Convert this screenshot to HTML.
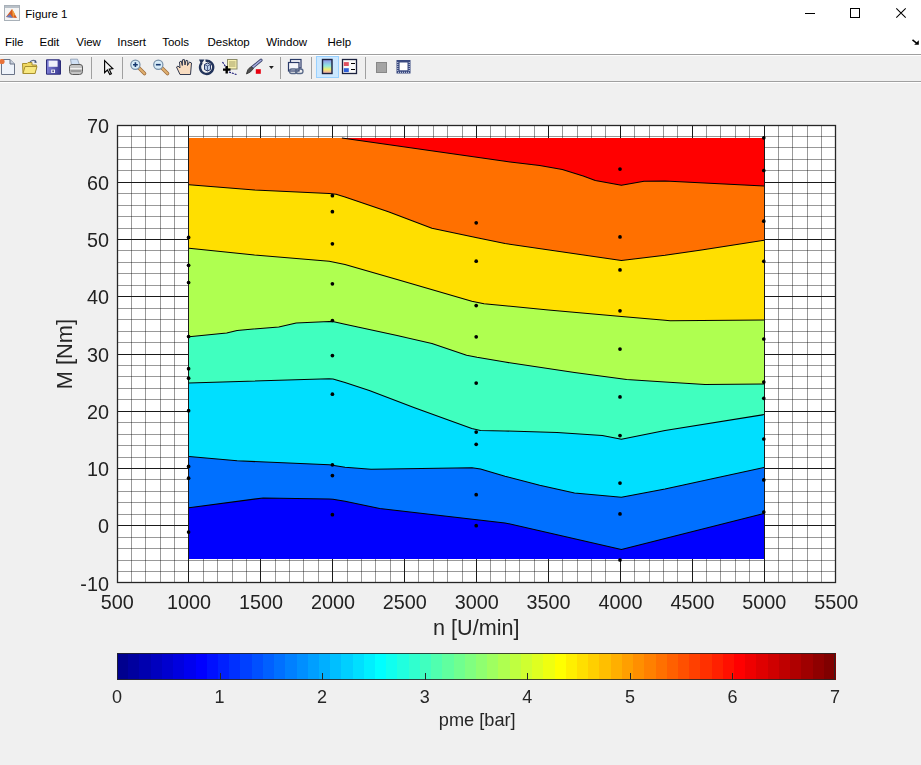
<!DOCTYPE html>
<html><head><meta charset="utf-8">
<style>
html,body{margin:0;padding:0;width:921px;height:765px;overflow:hidden;background:#f0f0f0;font-family:"Liberation Sans",sans-serif;}
#title{position:absolute;left:0;top:0;width:921px;height:54px;background:#fff;}
#title .t{position:absolute;left:25px;top:6px;font-size:12px;color:#000;}
.menu{position:absolute;top:34px;font-size:12px;color:#000;}
#sep1{position:absolute;left:0;top:54px;width:921px;height:1px;background:#a0a0a0;}
#sep1b{position:absolute;left:0;top:55px;width:921px;height:1px;background:#fff;}
#tb{position:absolute;left:0;top:56px;width:921px;height:25px;background:#f0f0f0;}
#sep2{position:absolute;left:0;top:81px;width:921px;height:1px;background:#a0a0a0;}
#sep2b{position:absolute;left:0;top:82px;width:921px;height:1px;background:#fff;}
.vs{position:absolute;top:57px;width:1px;height:22px;background:#a0a0a0;}
.ic{position:absolute;top:56px;}
.fig{position:absolute;left:0;top:82px;will-change:transform;}
</style></head><body>
<div id="title">
<svg style="position:absolute;left:4px;top:5px" width="16" height="16" viewBox="0 0 16 16">
<rect x="0.5" y="0.5" width="15" height="15" fill="#f4f4f4" stroke="#a8b0b8"/>
<rect x="1" y="1" width="14" height="2" fill="#b8c0c8"/>
<path d="M2 12 L8 4 L13 13 Z" fill="#d65a20"/>
<path d="M2 12 L6 9 L9 13 Z" fill="#6a7fc0"/>
<path d="M8 4 L11 9 L9 13 Z" fill="#f0a040"/>
</svg>
<svg style="position:absolute;left:0;top:0" width="921" height="54" font-family="Liberation Sans, sans-serif" font-size="11.5" fill="#000">
<text x="25.3" y="17.9">Figure 1</text>
<text x="4.9" y="45.6">File</text>
<text x="39.5" y="45.6">Edit</text>
<text x="76.2" y="45.6">View</text>
<text x="117.3" y="45.6">Insert</text>
<text x="162.2" y="45.6">Tools</text>
<text x="207.5" y="45.6">Desktop</text>
<text x="266.2" y="45.6">Window</text>
<text x="327.5" y="45.6">Help</text>
<rect x="805" y="13" width="10" height="1" fill="#000"/>
<rect x="850.5" y="8.5" width="9" height="9" fill="none" stroke="#000"/>
<path d="M896.3 8.3L905.7 17.7M905.7 8.3L896.3 17.7" stroke="#000" stroke-width="1.05"/>
</svg>
<svg style="position:absolute;left:912px;top:39px" width="8" height="6" viewBox="0 0 8 6"><path d="M0.5 0.8 L5 4.5" stroke="#000" stroke-width="1.6"/><path d="M6.8 1.2 L6.8 5.8 L2.2 5.8 Z" fill="#000"/></svg>
</div>
<div id="sep1"></div><div id="sep1b"></div>
<div id="tb"></div>
<div id="sep2"></div><div id="sep2b"></div>
<div class="vs" style="left:91px"></div>
<div class="vs" style="left:122px"></div>
<div class="vs" style="left:280px"></div>
<div class="vs" style="left:311px"></div>
<div class="vs" style="left:365px"></div>
<svg style="position:absolute;left:0;top:0" width="430" height="82" viewBox="0 0 430 82">
<!-- new doc -->
<path d="M1.5 59.5 H10 L14.5 64 V74.5 H1.5 Z" fill="#eef3fa" stroke="#6a7488" stroke-width="1"/>
<path d="M10 59.5 V64 H14.5" fill="#c8d0dc" stroke="#6a7488" stroke-width="1"/>
<circle cx="2" cy="61.5" r="2.6" fill="#e8733a"/>
<!-- open folder -->
<path d="M22.5 63.5 H27 L28 62.5 H32 V65 H36.5 L35 73.5 H23 Z" fill="#f0d860" stroke="#a89030" stroke-width="1"/>
<path d="M23 73.5 L25 66.5 H37 L35 73.5 Z" fill="#f8e880" stroke="#a89030" stroke-width="1"/>
<path d="M30 62 Q33 59 36 61.5" fill="none" stroke="#607090" stroke-width="1.2"/>
<path d="M35 60 L37 62.5 L34.5 63 Z" fill="#405070"/>
<!-- save floppy -->
<defs><linearGradient id="flp" x1="0" y1="0" x2="1" y2="0"><stop offset="0" stop-color="#8080d8"/><stop offset="1" stop-color="#383890"/></linearGradient></defs>
<path d="M46.5 59.8 H59.5 L60.5 61 V74.2 H46.5 Z" fill="url(#flp)" stroke="#2c2c78" stroke-width="1"/>
<rect x="48.6" y="60.6" width="9" height="6.2" fill="#eef0fa"/>
<rect x="51.2" y="69.6" width="3.8" height="3.4" fill="#f4f4fa"/>
<rect x="52.4" y="70.4" width="1.4" height="1.8" fill="#303070"/>
<!-- printer -->
<path d="M71.5 65 L70.5 59.2 H77.5 L79.5 65 Z" fill="#d0e0f4" stroke="#8898b0" stroke-width="0.8"/>
<path d="M69.5 66.5 Q70 64.5 72 64.5 H80 Q82.5 64.5 82.5 67 V71.5 Q82.5 74.5 79.5 74.5 H72.5 Q69.5 74.5 69.5 71.5 Z" fill="#c4c4c4" stroke="#5a5a5a" stroke-width="1"/>
<path d="M70.2 68.6 H81.8" stroke="#f0f0f0" stroke-width="1.2"/>
<path d="M70.5 71 H81.5" stroke="#6a6a6a" stroke-width="0.9"/>
<!-- arrow -->
<path d="M104.6 60.6 V72.6 L107.4 70 L109.8 74.6 L111.4 73.8 L109.2 69.2 L112.8 68.6 Z" fill="#f4f4f4" stroke="#000" stroke-width="1.15" stroke-linejoin="miter"/>
<!-- zoom in -->
<path d="M139 68 L144.5 73.5" stroke="#a07040" stroke-width="3.6" stroke-linecap="round"/>
<path d="M139 68 L144.5 73.5" stroke="#e0b070" stroke-width="2" stroke-linecap="round"/>
<circle cx="135.4" cy="64.7" r="4.6" fill="#d8ecf8" stroke="#7890a8" stroke-width="1.2"/>
<path d="M133 64.7 H137.8 M135.4 62.3 V67.1" stroke="#183a70" stroke-width="1.6"/>
<!-- zoom out -->
<path d="M162 68 L167.5 73.5" stroke="#a07040" stroke-width="3.6" stroke-linecap="round"/>
<path d="M162 68 L167.5 73.5" stroke="#e0b070" stroke-width="2" stroke-linecap="round"/>
<circle cx="158.3" cy="64.7" r="4.6" fill="#d8ecf8" stroke="#7890a8" stroke-width="1.2"/>
<path d="M155.9 64.7 H160.7" stroke="#183a70" stroke-width="1.6"/>
<!-- pan hand -->
<path d="M180 74.5 L176.5 67 L178 66 L180 68 L179.5 62 L181.2 61 L182.3 65.5 L182.5 59.8 L184.3 59.5 L185 65 L186 60.3 L187.8 60.8 L187.5 65.5 L189.5 62 L191.5 63 L190.5 74.5 Z" fill="#f8dcc0" stroke="#283048" stroke-width="0.95" stroke-linejoin="round"/>
<!-- rotate 3d -->
<path d="M201.8 62.8 A6.6 6.6 0 1 0 205.5 60.8" fill="none" stroke="#22335a" stroke-width="2.4"/>
<path d="M199 59.6 L204.5 59.4 L201.2 64.2 Z" fill="#22335a"/>
<path d="M204.5 64.5 L207.5 63 L210.5 64.5 V69.5 L207.5 71 L204.5 69.5 Z" fill="#b8cce8" stroke="#2a3a68" stroke-width="1"/>
<path d="M204.5 64.5 L207.5 66 L210.5 64.5 M207.5 66 V71" fill="none" stroke="#3a4a78" stroke-width="0.8"/>
<!-- data cursor -->
<rect x="227.5" y="59.5" width="9.5" height="9.5" fill="#f8f0b0" stroke="#8c8c68" stroke-width="1"/>
<path d="M229 62 H235.5 M229 64 H235.5 M229 66 H235.5" stroke="#9a9460" stroke-width="0.9"/>
<path d="M222.5 62 L226.5 68 M229 72 L236.5 74.5" stroke="#101070" stroke-width="1.1" stroke-dasharray="2 1"/>
<path d="M223 69.6 H230.5 M226.7 66 V73.5" stroke="#000" stroke-width="2.4"/>
<!-- brush -->
<path d="M252.7 67.1 L261 60.3" stroke="#404870" stroke-width="3.2" stroke-linecap="round"/>
<path d="M252.7 67.1 L261 60.3" stroke="#a8b0e0" stroke-width="1.4" stroke-linecap="round"/>
<path d="M246.5 74 Q247 69 251 66.5 L253.5 68.5 Q251 72.5 246.5 74 Z" fill="#505050" stroke="#303030" stroke-width="0.8"/>
<rect x="255.8" y="69.2" width="5" height="4.6" fill="#e80010"/>
<path d="M269 66 H273.8 L271.4 69 Z" fill="#202020"/>
<!-- link -->
<rect x="290.5" y="59.5" width="10.5" height="8.5" fill="#f4f6fa" stroke="#2a3a68" stroke-width="1.2"/>
<rect x="288.5" y="62.5" width="10.5" height="8.5" fill="#f4f6fa" stroke="#2a3a68" stroke-width="1.2"/>
<rect x="289.5" y="69" width="7.5" height="4.5" rx="2.2" fill="none" stroke="#586888" stroke-width="1.3"/>
<rect x="295.5" y="69" width="7.5" height="4.5" rx="2.2" fill="none" stroke="#586888" stroke-width="1.3"/>
<!-- colorbar pressed -->
<rect x="316.5" y="56.5" width="22" height="21" fill="#cce8ff" stroke="#99d1ff" stroke-width="1"/>
<defs><linearGradient id="cbg" x1="0" y1="0" x2="0" y2="1">
<stop offset="0" stop-color="#9090e8"/><stop offset="0.45" stop-color="#90e8e0"/><stop offset="0.7" stop-color="#f0f070"/><stop offset="1" stop-color="#f0a0b0"/></linearGradient></defs>
<rect x="322.5" y="59.5" width="9.5" height="14" fill="url(#cbg)" stroke="#1c2240" stroke-width="1.4"/>
<!-- legend -->
<rect x="342.5" y="59.5" width="14" height="14" fill="#fafafa" stroke="#1c2240" stroke-width="1.3"/>
<rect x="343.8" y="62.1" width="5" height="3.9" fill="#e05060"/>
<rect x="343.8" y="68.2" width="5" height="3.9" fill="#3060d8"/>
<path d="M351 63.5 H355 M351 69.5 H355" stroke="#000" stroke-width="1.2"/>
<!-- hide plot tools -->
<rect x="376.5" y="62.5" width="10" height="10" fill="#a4a4a4" stroke="#888" stroke-width="1"/>
<!-- show plot tools -->
<rect x="396.5" y="60" width="14" height="13.5" fill="#3a4a80"/>
<rect x="399.6" y="62.5" width="7.9" height="7.8" fill="#fff"/>
<path d="M397.8 62 V71 M409.2 62 V71 M398 72.3 H409" stroke="#d8dcec" stroke-width="1" stroke-dasharray="1 1"/>
</svg>

<svg class="fig" width="921" height="683" viewBox="0 82 921 683"><rect x="117" y="125" width="718" height="457" fill="#fff"/><path d="M131.5 125V582M145.5 125V582M160.5 125V582M174.5 125V582M203.5 125V582M217.5 125V582M232.5 125V582M246.5 125V582M275.5 125V582M289.5 125V582M303.5 125V582M318.5 125V582M347.5 125V582M361.5 125V582M375.5 125V582M390.5 125V582M418.5 125V582M433.5 125V582M447.5 125V582M462.5 125V582M490.5 125V582M505.5 125V582M519.5 125V582M534.5 125V582M562.5 125V582M577.5 125V582M591.5 125V582M605.5 125V582M634.5 125V582M649.5 125V582M663.5 125V582M677.5 125V582M706.5 125V582M720.5 125V582M735.5 125V582M749.5 125V582M778.5 125V582M792.5 125V582M807.5 125V582M821.5 125V582" stroke="#000" stroke-opacity="0.4" stroke-width="1" fill="none"/><path d="M117 571.5H835M117 560.5H835M117 548.5H835M117 537.5H835M117 514.5H835M117 502.5H835M117 491.5H835M117 479.5H835M117 457.5H835M117 445.5H835M117 434.5H835M117 422.5H835M117 399.5H835M117 388.5H835M117 376.5H835M117 365.5H835M117 342.5H835M117 331.5H835M117 319.5H835M117 308.5H835M117 285.5H835M117 273.5H835M117 262.5H835M117 250.5H835M117 228.5H835M117 216.5H835M117 205.5H835M117 193.5H835M117 170.5H835M117 159.5H835M117 147.5H835M117 136.5H835" stroke="#000" stroke-opacity="0.4" stroke-width="1" fill="none"/><path d="M188.5 125V582M260.5 125V582M332.5 125V582M404.5 125V582M476.5 125V582M548.5 125V582M620.5 125V582M692.5 125V582M764.5 125V582M117 525.5H835M117 468.5H835M117 411.5H835M117 354.5H835M117 296.5H835M117 239.5H835M117 182.5H835" stroke="#1a1a1a" stroke-width="1" fill="none"/><rect x="189.0" y="138.0" width="575.0" height="421.0" fill="#0000ff"/><polygon points="189.0,507.8 263.2,497.9 329.2,499.1 333.0,499.2 345.0,501.2 379.7,508.6 505.0,522.9 557.1,534.7 621.4,549.5 665.0,538.4 764.0,513.4 764.0,138.0 189.0,138.0" fill="#0070ff"/><polygon points="189.0,456.5 237.1,460.8 329.2,464.8 345.0,467.3 371.0,469.2 472.0,467.7 480.5,469.0 505.0,476.2 539.7,485.2 574.5,493.0 621.4,497.2 665.0,488.9 764.0,467.4 764.0,138.0 189.0,138.0" fill="#00dfff"/><polygon points="189.0,382.9 329.2,378.8 333.0,379.0 345.0,382.6 369.3,390.4 414.5,407.8 471.8,428.6 480.5,430.4 505.0,431.0 557.1,432.5 602.3,435.6 621.4,439.2 665.0,430.6 764.0,414.6 764.0,138.0 189.0,138.0" fill="#40ffbf"/><polygon points="189.0,336.8 226.7,333.0 237.1,330.4 278.8,326.9 296.2,323.1 329.2,321.6 332.7,321.6 345.0,324.2 397.1,335.6 431.9,343.4 466.6,355.2 477.0,357.3 505.0,362.1 574.5,372.5 626.6,379.5 665.0,382.0 705.0,384.4 764.0,383.9 764.0,138.0 189.0,138.0" fill="#afff50"/><polygon points="189.0,248.2 254.5,255.1 329.2,261.2 345.0,264.5 397.1,279.5 471.8,301.2 484.0,303.8 505.0,305.8 548.4,310.0 621.5,316.5 665.0,320.2 670.2,320.7 764.0,320.0 764.0,138.0 189.0,138.0" fill="#ffdf00"/><polygon points="189.0,184.8 254.5,190.0 329.2,193.5 336.1,194.3 345.0,196.9 388.4,211.7 431.9,228.2 477.0,237.8 505.0,243.5 621.4,260.4 665.0,255.2 701.5,250.0 764.0,240.3 764.0,138.0 189.0,138.0" fill="#ff7000"/><polygon points="341.9,138.0 505.0,161.3 539.7,165.6 562.3,169.6 583.2,176.0 595.3,180.4 621.4,185.2 644.0,181.3 665.0,180.9 764.0,186.1 764.0,138.0" fill="#ff0000"/><polyline points="189.0,507.8 263.2,497.9 329.2,499.1 333.0,499.2 345.0,501.2 379.7,508.6 505.0,522.9 557.1,534.7 621.4,549.5 665.0,538.4 764.0,513.4" fill="none" stroke="#000" stroke-width="1.05" stroke-linejoin="round"/><polyline points="189.0,456.5 237.1,460.8 329.2,464.8 345.0,467.3 371.0,469.2 472.0,467.7 480.5,469.0 505.0,476.2 539.7,485.2 574.5,493.0 621.4,497.2 665.0,488.9 764.0,467.4" fill="none" stroke="#000" stroke-width="1.05" stroke-linejoin="round"/><polyline points="189.0,382.9 329.2,378.8 333.0,379.0 345.0,382.6 369.3,390.4 414.5,407.8 471.8,428.6 480.5,430.4 505.0,431.0 557.1,432.5 602.3,435.6 621.4,439.2 665.0,430.6 764.0,414.6" fill="none" stroke="#000" stroke-width="1.05" stroke-linejoin="round"/><polyline points="189.0,336.8 226.7,333.0 237.1,330.4 278.8,326.9 296.2,323.1 329.2,321.6 332.7,321.6 345.0,324.2 397.1,335.6 431.9,343.4 466.6,355.2 477.0,357.3 505.0,362.1 574.5,372.5 626.6,379.5 665.0,382.0 705.0,384.4 764.0,383.9" fill="none" stroke="#000" stroke-width="1.05" stroke-linejoin="round"/><polyline points="189.0,248.2 254.5,255.1 329.2,261.2 345.0,264.5 397.1,279.5 471.8,301.2 484.0,303.8 505.0,305.8 548.4,310.0 621.5,316.5 665.0,320.2 670.2,320.7 764.0,320.0" fill="none" stroke="#000" stroke-width="1.05" stroke-linejoin="round"/><polyline points="189.0,184.8 254.5,190.0 329.2,193.5 336.1,194.3 345.0,196.9 388.4,211.7 431.9,228.2 477.0,237.8 505.0,243.5 621.4,260.4 665.0,255.2 701.5,250.0 764.0,240.3" fill="none" stroke="#000" stroke-width="1.05" stroke-linejoin="round"/><polyline points="341.9,138.0 505.0,161.3 539.7,165.6 562.3,169.6 583.2,176.0 595.3,180.4 621.4,185.2 644.0,181.3 665.0,180.9 764.0,186.1" fill="none" stroke="#000" stroke-width="1.05" stroke-linejoin="round"/><g fill="#000"><circle cx="188.6" cy="237.4" r="1.85"/><circle cx="188.6" cy="265.3" r="1.85"/><circle cx="188.6" cy="282.5" r="1.85"/><circle cx="188.6" cy="336.5" r="1.85"/><circle cx="188.6" cy="368.7" r="1.85"/><circle cx="188.6" cy="378.2" r="1.85"/><circle cx="188.6" cy="410.7" r="1.85"/><circle cx="188.6" cy="466.4" r="1.85"/><circle cx="188.6" cy="478.2" r="1.85"/><circle cx="188.6" cy="532.1" r="1.85"/><circle cx="332.4" cy="195.7" r="1.85"/><circle cx="332.4" cy="211.7" r="1.85"/><circle cx="332.4" cy="243.8" r="1.85"/><circle cx="332.4" cy="283.8" r="1.85"/><circle cx="332.4" cy="320.5" r="1.85"/><circle cx="332.4" cy="355.6" r="1.85"/><circle cx="332.4" cy="394.2" r="1.85"/><circle cx="332.4" cy="464.8" r="1.85"/><circle cx="332.4" cy="475.6" r="1.85"/><circle cx="332.4" cy="514.7" r="1.85"/><circle cx="476.2" cy="222.8" r="1.85"/><circle cx="476.2" cy="261.2" r="1.85"/><circle cx="476.2" cy="305.6" r="1.85"/><circle cx="476.2" cy="336.8" r="1.85"/><circle cx="476.2" cy="383.1" r="1.85"/><circle cx="476.2" cy="432.1" r="1.85"/><circle cx="476.2" cy="444.3" r="1.85"/><circle cx="476.2" cy="494.7" r="1.85"/><circle cx="476.2" cy="525.7" r="1.85"/><circle cx="620.0" cy="169.1" r="1.85"/><circle cx="620.0" cy="236.9" r="1.85"/><circle cx="620.0" cy="269.9" r="1.85"/><circle cx="620.0" cy="310.8" r="1.85"/><circle cx="620.0" cy="349.1" r="1.85"/><circle cx="620.0" cy="396.9" r="1.85"/><circle cx="620.0" cy="435.6" r="1.85"/><circle cx="620.0" cy="483.1" r="1.85"/><circle cx="620.0" cy="513.9" r="1.85"/><circle cx="620.0" cy="560.0" r="1.85"/><circle cx="763.8" cy="137.8" r="1.85"/><circle cx="763.8" cy="170.5" r="1.85"/><circle cx="763.8" cy="221.2" r="1.85"/><circle cx="763.8" cy="261.3" r="1.85"/><circle cx="763.8" cy="339.0" r="1.85"/><circle cx="763.8" cy="382.1" r="1.85"/><circle cx="763.8" cy="398.3" r="1.85"/><circle cx="763.8" cy="439.0" r="1.85"/><circle cx="763.8" cy="479.9" r="1.85"/><circle cx="763.8" cy="512.0" r="1.85"/></g><rect x="117.5" y="125.5" width="718" height="457" fill="none" stroke="#262626" stroke-width="1.3"/><g font-size="19.8" fill="#222" font-family="Liberation Sans, sans-serif"><text x="117.2" y="609" text-anchor="middle">500</text><text x="189.1" y="609" text-anchor="middle">1000</text><text x="261.0" y="609" text-anchor="middle">1500</text><text x="332.9" y="609" text-anchor="middle">2000</text><text x="404.8" y="609" text-anchor="middle">2500</text><text x="476.7" y="609" text-anchor="middle">3000</text><text x="548.6" y="609" text-anchor="middle">3500</text><text x="620.5" y="609" text-anchor="middle">4000</text><text x="692.4" y="609" text-anchor="middle">4500</text><text x="764.3" y="609" text-anchor="middle">5000</text><text x="836.2" y="609" text-anchor="middle">5500</text><text x="108.9" y="590.5" text-anchor="end">-10</text><text x="108.9" y="533.2" text-anchor="end">0</text><text x="108.9" y="476.0" text-anchor="end">10</text><text x="108.9" y="418.8" text-anchor="end">20</text><text x="108.9" y="361.5" text-anchor="end">30</text><text x="108.9" y="304.2" text-anchor="end">40</text><text x="108.9" y="247.0" text-anchor="end">50</text><text x="108.9" y="189.8" text-anchor="end">60</text><text x="108.9" y="132.5" text-anchor="end">70</text></g><text x="476.3" y="634.5" text-anchor="middle" font-size="21.6" fill="#262626" font-family="Liberation Sans, sans-serif">n [U/min]</text><text transform="translate(72.2,354.1) rotate(-90)" text-anchor="middle" font-size="21.8" fill="#262626" font-family="Liberation Sans, sans-serif">M [Nm]</text><g shape-rendering="crispEdges"><rect x="117.00" y="653" width="12.22" height="27" fill="rgb(0,0,143)"/><rect x="128.22" y="653" width="12.22" height="27" fill="rgb(0,0,159)"/><rect x="139.44" y="653" width="12.22" height="27" fill="rgb(0,0,175)"/><rect x="150.66" y="653" width="12.22" height="27" fill="rgb(0,0,191)"/><rect x="161.88" y="653" width="12.22" height="27" fill="rgb(0,0,207)"/><rect x="173.09" y="653" width="12.22" height="27" fill="rgb(0,0,223)"/><rect x="184.31" y="653" width="12.22" height="27" fill="rgb(0,0,239)"/><rect x="195.53" y="653" width="12.22" height="27" fill="rgb(0,0,255)"/><rect x="206.75" y="653" width="12.22" height="27" fill="rgb(0,16,255)"/><rect x="217.97" y="653" width="12.22" height="27" fill="rgb(0,32,255)"/><rect x="229.19" y="653" width="12.22" height="27" fill="rgb(0,48,255)"/><rect x="240.41" y="653" width="12.22" height="27" fill="rgb(0,64,255)"/><rect x="251.62" y="653" width="12.22" height="27" fill="rgb(0,80,255)"/><rect x="262.84" y="653" width="12.22" height="27" fill="rgb(0,96,255)"/><rect x="274.06" y="653" width="12.22" height="27" fill="rgb(0,112,255)"/><rect x="285.28" y="653" width="12.22" height="27" fill="rgb(0,128,255)"/><rect x="296.50" y="653" width="12.22" height="27" fill="rgb(0,143,255)"/><rect x="307.72" y="653" width="12.22" height="27" fill="rgb(0,159,255)"/><rect x="318.94" y="653" width="12.22" height="27" fill="rgb(0,175,255)"/><rect x="330.16" y="653" width="12.22" height="27" fill="rgb(0,191,255)"/><rect x="341.38" y="653" width="12.22" height="27" fill="rgb(0,207,255)"/><rect x="352.59" y="653" width="12.22" height="27" fill="rgb(0,223,255)"/><rect x="363.81" y="653" width="12.22" height="27" fill="rgb(0,239,255)"/><rect x="375.03" y="653" width="12.22" height="27" fill="rgb(0,255,255)"/><rect x="386.25" y="653" width="12.22" height="27" fill="rgb(16,255,239)"/><rect x="397.47" y="653" width="12.22" height="27" fill="rgb(32,255,223)"/><rect x="408.69" y="653" width="12.22" height="27" fill="rgb(48,255,207)"/><rect x="419.91" y="653" width="12.22" height="27" fill="rgb(64,255,191)"/><rect x="431.12" y="653" width="12.22" height="27" fill="rgb(80,255,175)"/><rect x="442.34" y="653" width="12.22" height="27" fill="rgb(96,255,159)"/><rect x="453.56" y="653" width="12.22" height="27" fill="rgb(112,255,143)"/><rect x="464.78" y="653" width="12.22" height="27" fill="rgb(128,255,128)"/><rect x="476.00" y="653" width="12.22" height="27" fill="rgb(143,255,112)"/><rect x="487.22" y="653" width="12.22" height="27" fill="rgb(159,255,96)"/><rect x="498.44" y="653" width="12.22" height="27" fill="rgb(175,255,80)"/><rect x="509.66" y="653" width="12.22" height="27" fill="rgb(191,255,64)"/><rect x="520.88" y="653" width="12.22" height="27" fill="rgb(207,255,48)"/><rect x="532.09" y="653" width="12.22" height="27" fill="rgb(223,255,32)"/><rect x="543.31" y="653" width="12.22" height="27" fill="rgb(239,255,16)"/><rect x="554.53" y="653" width="12.22" height="27" fill="rgb(255,255,0)"/><rect x="565.75" y="653" width="12.22" height="27" fill="rgb(255,239,0)"/><rect x="576.97" y="653" width="12.22" height="27" fill="rgb(255,223,0)"/><rect x="588.19" y="653" width="12.22" height="27" fill="rgb(255,207,0)"/><rect x="599.41" y="653" width="12.22" height="27" fill="rgb(255,191,0)"/><rect x="610.62" y="653" width="12.22" height="27" fill="rgb(255,175,0)"/><rect x="621.84" y="653" width="12.22" height="27" fill="rgb(255,159,0)"/><rect x="633.06" y="653" width="12.22" height="27" fill="rgb(255,143,0)"/><rect x="644.28" y="653" width="12.22" height="27" fill="rgb(255,128,0)"/><rect x="655.50" y="653" width="12.22" height="27" fill="rgb(255,112,0)"/><rect x="666.72" y="653" width="12.22" height="27" fill="rgb(255,96,0)"/><rect x="677.94" y="653" width="12.22" height="27" fill="rgb(255,80,0)"/><rect x="689.16" y="653" width="12.22" height="27" fill="rgb(255,64,0)"/><rect x="700.38" y="653" width="12.22" height="27" fill="rgb(255,48,0)"/><rect x="711.59" y="653" width="12.22" height="27" fill="rgb(255,32,0)"/><rect x="722.81" y="653" width="12.22" height="27" fill="rgb(255,16,0)"/><rect x="734.03" y="653" width="12.22" height="27" fill="rgb(255,0,0)"/><rect x="745.25" y="653" width="12.22" height="27" fill="rgb(239,0,0)"/><rect x="756.47" y="653" width="12.22" height="27" fill="rgb(223,0,0)"/><rect x="767.69" y="653" width="12.22" height="27" fill="rgb(207,0,0)"/><rect x="778.91" y="653" width="12.22" height="27" fill="rgb(191,0,0)"/><rect x="790.12" y="653" width="12.22" height="27" fill="rgb(175,0,0)"/><rect x="801.34" y="653" width="12.22" height="27" fill="rgb(159,0,0)"/><rect x="812.56" y="653" width="12.22" height="27" fill="rgb(143,0,0)"/><rect x="823.78" y="653" width="12.22" height="27" fill="rgb(128,0,0)"/></g><path d="M220.5 673V680M322.5 673V680M425.5 673V680M527.5 673V680M630.5 673V680M732.5 673V680" stroke="#262626" stroke-width="1"/><rect x="117.5" y="653.5" width="717" height="26" fill="none" stroke="#262626" stroke-width="1" stroke-opacity="0.85"/><g font-size="18" fill="#262626" font-family="Liberation Sans, sans-serif"><text x="117.0" y="703.3" text-anchor="middle">0</text><text x="219.6" y="703.3" text-anchor="middle">1</text><text x="322.1" y="703.3" text-anchor="middle">2</text><text x="424.7" y="703.3" text-anchor="middle">3</text><text x="527.3" y="703.3" text-anchor="middle">4</text><text x="629.9" y="703.3" text-anchor="middle">5</text><text x="732.4" y="703.3" text-anchor="middle">6</text><text x="835.0" y="703.3" text-anchor="middle">7</text></g><text x="477.2" y="725.5" text-anchor="middle" font-size="18.2" fill="#262626" font-family="Liberation Sans, sans-serif">pme [bar]</text></svg>
</body></html>
